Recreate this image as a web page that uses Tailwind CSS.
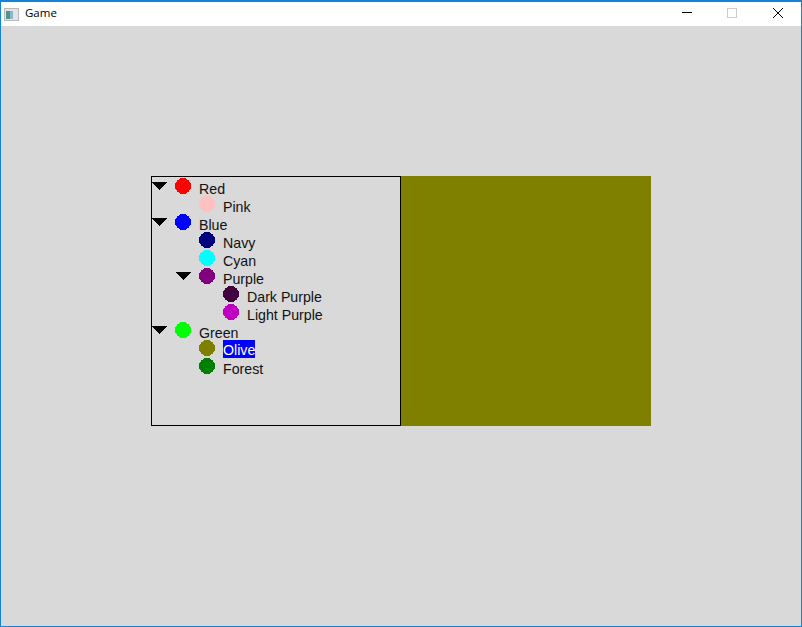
<!DOCTYPE html>
<html lang="en">
<head>
    <meta charset="UTF-8">
    <title>Game</title>
    <script src="https://cdn.jsdelivr.net/npm/@tailwindcss/browser@4"></script>
</head>
<body class="overflow-hidden">
    <div class="w-[802px] h-[627px] flex flex-col border border-[#1383d8] border-t-2 bg-[#d9d9d9]">
        <!-- title bar -->
        <div class="h-[24px] bg-white flex items-center shrink-0 font-['Open_Sans',sans-serif] text-[11.5px] text-black">
            <svg class="ml-[3px] mr-[6px] mt-[1px]" width="15" height="13" viewBox="0 0 15 13" shape-rendering="crispEdges">
                <rect width="15" height="13" fill="#b8b8b8"/>
                <rect x="1" y="1" width="13" height="11" fill="#dfe5e8"/>
                <rect x="2" y="3" width="4" height="8" fill="#4f9488"/>
                <rect x="6" y="3" width="3" height="8" fill="#8fb6c4"/>
            </svg>
            <span class="mb-[2px]">Game</span>
            <div class="ml-auto flex items-center mb-px">
                <svg width="11" height="11" viewBox="0 0 11 11" class="mr-[34px]" shape-rendering="crispEdges"><rect x="0" y="4" width="10" height="1" fill="#000"/></svg>
                <svg width="11" height="11" viewBox="0 0 11 11" class="mr-[34px]" shape-rendering="crispEdges"><rect x="0.5" y="0.5" width="9" height="9" fill="none" stroke="#cccccc"/></svg>
                <svg width="11" height="11" viewBox="0 0 11 11" class="mr-[18px]"><path d="M1 0 L11 10 M11 0 L1 10" stroke="#000" stroke-width="1" fill="none"/></svg>
            </div>
        </div>

        <!-- content -->
        <div class="flex pl-[150px] pt-[150px]">
            <div class="w-[250px] h-[250px] border border-black pt-px font-['Liberation_Sans',sans-serif] text-[14.2px] text-[#111]">
                <div class="-ml-px">
                    <div class="h-[18px] flex">
                        <svg class="mt-[4px] mr-2" width="16" height="8" viewBox="0 0 16 8" shape-rendering="crispEdges"><path d="M0 0H16L8 8Z" fill="#000"/></svg>
                        <svg class="mr-2" width="16" height="16" viewBox="0 0 16 16" shape-rendering="crispEdges"><circle cx="8" cy="8" r="8" fill="#ff0000"/></svg>
                        <span class="leading-[18px] pt-[2px]">Red</span>
                    </div>
                    <div class="h-[18px] flex pl-[48px]">
                        <svg class="mr-2" width="16" height="16" viewBox="0 0 16 16" shape-rendering="crispEdges"><circle cx="8" cy="8" r="8" fill="#ffc0c0"/></svg>
                        <span class="leading-[18px] pt-[2px]">Pink</span>
                    </div>
                    <div class="h-[18px] flex">
                        <svg class="mt-[4px] mr-2" width="16" height="8" viewBox="0 0 16 8" shape-rendering="crispEdges"><path d="M0 0H16L8 8Z" fill="#000"/></svg>
                        <svg class="mr-2" width="16" height="16" viewBox="0 0 16 16" shape-rendering="crispEdges"><circle cx="8" cy="8" r="8" fill="#0000ff"/></svg>
                        <span class="leading-[18px] pt-[2px]">Blue</span>
                    </div>
                    <div class="h-[18px] flex pl-[48px]">
                        <svg class="mr-2" width="16" height="16" viewBox="0 0 16 16" shape-rendering="crispEdges"><circle cx="8" cy="8" r="8" fill="#000080"/></svg>
                        <span class="leading-[18px] pt-[2px]">Navy</span>
                    </div>
                    <div class="h-[18px] flex pl-[48px]">
                        <svg class="mr-2" width="16" height="16" viewBox="0 0 16 16" shape-rendering="crispEdges"><circle cx="8" cy="8" r="8" fill="#00ffff"/></svg>
                        <span class="leading-[18px] pt-[2px]">Cyan</span>
                    </div>
                    <div class="h-[18px] flex pl-[24px]">
                        <svg class="mt-[4px] mr-2" width="16" height="8" viewBox="0 0 16 8" shape-rendering="crispEdges"><path d="M0 0H16L8 8Z" fill="#000"/></svg>
                        <svg class="mr-2" width="16" height="16" viewBox="0 0 16 16" shape-rendering="crispEdges"><circle cx="8" cy="8" r="8" fill="#800080"/></svg>
                        <span class="leading-[18px] pt-[2px]">Purple</span>
                    </div>
                    <div class="h-[18px] flex pl-[72px]">
                        <svg class="mr-2" width="16" height="16" viewBox="0 0 16 16" shape-rendering="crispEdges"><circle cx="8" cy="8" r="8" fill="#400040"/></svg>
                        <span class="leading-[18px] pt-[2px]">Dark Purple</span>
                    </div>
                    <div class="h-[18px] flex pl-[72px]">
                        <svg class="mr-2" width="16" height="16" viewBox="0 0 16 16" shape-rendering="crispEdges"><circle cx="8" cy="8" r="8" fill="#c000c0"/></svg>
                        <span class="leading-[18px] pt-[2px]">Light Purple</span>
                    </div>
                    <div class="h-[18px] flex">
                        <svg class="mt-[4px] mr-2" width="16" height="8" viewBox="0 0 16 8" shape-rendering="crispEdges"><path d="M0 0H16L8 8Z" fill="#000"/></svg>
                        <svg class="mr-2" width="16" height="16" viewBox="0 0 16 16" shape-rendering="crispEdges"><circle cx="8" cy="8" r="8" fill="#00ff00"/></svg>
                        <span class="leading-[18px] pt-[2px]">Green</span>
                    </div>
                    <div class="h-[18px] flex pl-[48px]">
                        <svg class="mr-2" width="16" height="16" viewBox="0 0 16 16" shape-rendering="crispEdges"><circle cx="8" cy="8" r="8" fill="#808000"/></svg>
                        <span class="leading-[18px] h-[18px] w-[32px] pt-px bg-[#0000ff] text-white">Olive</span>
                    </div>
                    <div class="h-[18px] flex pl-[48px]">
                        <svg class="mr-2" width="16" height="16" viewBox="0 0 16 16" shape-rendering="crispEdges"><circle cx="8" cy="8" r="8" fill="#008000"/></svg>
                        <span class="leading-[18px] pt-[2px]">Forest</span>
                    </div>
                </div>
            </div>
            <div class="w-[250px] h-[250px] bg-[#808000]"></div>
        </div>
    </div>
</body>
</html>
